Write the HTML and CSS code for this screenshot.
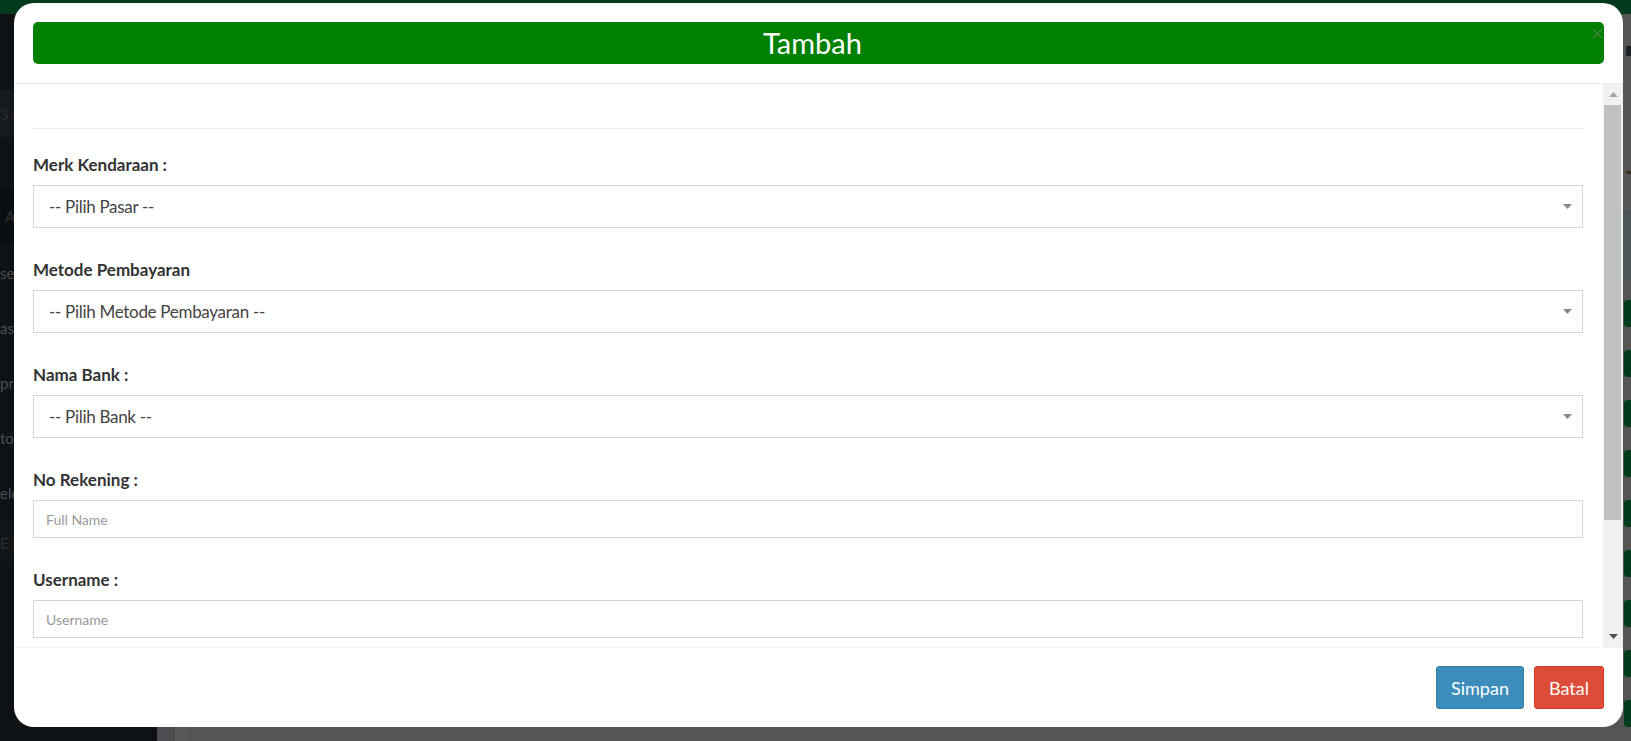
FILE: index.html
```html
<!DOCTYPE html>
<html lang="id">
<head>
<meta charset="utf-8">
<title>Tambah</title>
<link rel="stylesheet" href="styles.css">
</head>
<body>
<div class="app">
  <header class="topbar"></header>
  <div class="layout">
    <aside class="sidebar">
      <div class="sb-block sb-brand"><span class="sb-dim">3 O</span></div>
      <div class="sb-gap"></div>
      <div class="sb-block sb-head"><span class="sb-dim sb-a">A</span></div>
      <div class="sb-item">se</div>
      <div class="sb-item">as</div>
      <div class="sb-item">pro</div>
      <div class="sb-item">to</div>
      <div class="sb-item">ele</div>
      <div class="sb-block sb-foot"><span class="sb-dim">E R</span></div>
    </aside>
    <main class="content">
      <div class="strip-a"></div>
      <div class="strip-b"></div>
      <div class="content-main"></div>
      <div class="right-col">
        <div class="rc-top"><span class="rc-mark rc-mark-1"></span><span class="rc-mark rc-mark-2"></span></div>
        <div class="rc-band"></div>
        <div class="rc-list">
          <span class="rc-box"></span><span class="rc-box"></span><span class="rc-box"></span>
          <span class="rc-box"></span><span class="rc-box"></span><span class="rc-box"></span>
          <span class="rc-box"></span><span class="rc-box"></span><span class="rc-box"></span>
        </div>
      </div>
    </main>
  </div>
</div>

<div class="modal" role="dialog">
  <div class="modal-header">
    <div class="title-bar">
      <h4 class="modal-title">Tambah</h4>
      <button class="close" type="button" aria-label="Close">
        <svg width="11" height="11" viewBox="0 0 11 11"><path d="M1 1L10 10M10 1L1 10" stroke="#3f7f3f" stroke-width="1.6" fill="none"/></svg>
      </button>
    </div>
  </div>
  <div class="modal-main">
    <div class="modal-body">
      <hr class="divider">
      <div class="form-group">
        <label class="form-label">Merk Kendaraan :</label>
        <div class="select"><span class="select-text">-- Pilih Pasar --</span><svg class="caret" width="9" height="5" viewBox="0 0 9 5"><path d="M0 0H9L4.5 5Z" fill="#888"/></svg></div>
      </div>
      <div class="form-group">
        <label class="form-label">Metode Pembayaran</label>
        <div class="select"><span class="select-text">-- Pilih Metode Pembayaran --</span><svg class="caret" width="9" height="5" viewBox="0 0 9 5"><path d="M0 0H9L4.5 5Z" fill="#888"/></svg></div>
      </div>
      <div class="form-group">
        <label class="form-label">Nama Bank :</label>
        <div class="select"><span class="select-text">-- Pilih Bank --</span><svg class="caret" width="9" height="5" viewBox="0 0 9 5"><path d="M0 0H9L4.5 5Z" fill="#888"/></svg></div>
      </div>
      <div class="form-group">
        <label class="form-label">No Rekening :</label>
        <input class="input" type="text" placeholder="Full Name">
      </div>
      <div class="form-group">
        <label class="form-label">Username :</label>
        <input class="input" type="text" placeholder="Username">
      </div>
    </div>
    <div class="scrollbar">
      <div class="sb-btn"><svg width="9" height="5" viewBox="0 0 9 5"><path d="M0 5H9L4.5 0Z" fill="#a3a3a3"/></svg></div>
      <div class="sb-thumb"></div>
      <div class="sb-fill"></div>
      <div class="sb-btn"><svg width="9" height="5" viewBox="0 0 9 5"><path d="M0 0H9L4.5 5Z" fill="#505050"/></svg></div>
    </div>
  </div>
  <div class="modal-footer">
    <button class="btn btn-primary" type="button">Simpan</button>
    <button class="btn btn-danger" type="button">Batal</button>
  </div>
</div>
</body>
</html>
```

FILE: styles.css
```css
* { box-sizing: border-box; }

html, body {
  margin: 0;
  padding: 0;
}

body {
  width: 1631px;
  height: 741px;
  overflow: hidden;
  position: relative;
  background: #555555;
  font-family: Lato, "Liberation Sans", sans-serif;
}

/* ---------- page behind the modal (dimmed) ---------- */
.app {
  height: 741px;
  display: flex;
  flex-direction: column;
}

.topbar {
  flex: none;
  height: 14px;
  background: #033a1e;
}

.layout {
  flex: 1;
  display: flex;
  min-height: 0;
}

.sidebar {
  flex: none;
  width: 157px;
  background: #0f1214;
  display: flex;
  flex-direction: column;
  padding-top: 76px;
  font-size: 15px;
  color: #4a4e51;
  overflow: hidden;
}

.sb-block {
  display: flex;
  align-items: center;
}

.sb-brand {
  height: 47px;
  background: #15191b;
}

.sb-gap {
  height: 50px;
}

.sb-head {
  height: 58px;
  background: #0b0e10;
}

.sb-foot {
  height: 45px;
  background: #121517;
}

.sb-dim {
  color: #2c3033;
}

.sb-a {
  padding-left: 5px;
}

.sb-item {
  height: 55px;
  display: flex;
  align-items: center;
}

.content {
  flex: 1;
  display: flex;
}

.strip-a {
  width: 18px;
  background: #4b4d51;
}

.strip-b {
  width: 13px;
  background: #585858;
}

.content-main {
  flex: 1;
  background: #555555;
}

.right-col {
  width: 8px;
  display: flex;
  flex-direction: column;
}

.rc-top {
  height: 196px;
  background: #565656;
  display: flex;
  flex-direction: column;
  padding-top: 32px;
}

.rc-mark {
  display: block;
  width: 6px;
  margin-left: 3px;
  background: #1e2226;
}

.rc-mark-1 {
  height: 10px;
}

.rc-mark-2 {
  height: 3px;
  margin-top: 115px;
  background: #3a2e1c;
}

.rc-band {
  height: 70px;
  background: #4b5457;
}

.rc-list {
  flex: 1;
  background: #555555;
  display: flex;
  flex-direction: column;
  padding-top: 20px;
  gap: 23px;
}

.rc-box {
  display: block;
  height: 27px;
  margin-left: 1px;
  background: #013d1c;
  border-radius: 4px 0 0 4px;
}

/* ---------- modal ---------- */
.modal {
  position: absolute;
  left: 14px;
  top: 3px;
  width: 1609px;
  height: 724px;
  background: #ffffff;
  border-radius: 20px;
  display: flex;
  flex-direction: column;
  overflow: hidden;
}

.modal-header {
  flex: none;
  padding: 19px;
  border-bottom: 1px solid #ececec;
}

.title-bar {
  height: 42px;
  background: #008000;
  border-radius: 5px;
  display: flex;
}

.modal-title {
  flex: 1;
  margin: 0;
  text-align: center;
  color: #ffffff;
  font-size: 29px;
  font-weight: 400;
  line-height: 42px;
}

.close {
  flex: none;
  width: 11px;
  height: 11px;
  margin: 6px 1px 0 0;
  padding: 0;
  border: 0;
  background: none;
  display: flex;
}

.modal-main {
  flex: 1;
  min-height: 0;
  display: flex;
}

.modal-body {
  flex: 1;
  min-width: 0;
  padding: 19px 20px 0 19px;
  overflow: hidden;
}

.divider {
  margin: 25px 0 26px;
  height: 0;
  border: 0;
  border-top: 1px solid #ebebeb;
}

.form-group {
  margin-bottom: 32px;
}

.form-label {
  display: block;
  font-size: 17px;
  font-weight: 700;
  line-height: 20px;
  margin-bottom: 10px;
  color: #333333;
}

.select {
  height: 43px;
  border: 1px solid #d2d6de;
  display: flex;
  align-items: center;
  padding: 0 10px 1px 15px;
  font-size: 17px;
  letter-spacing: -0.3px;
  color: #444444;
}

.select-text {
  flex: 1;
}

.caret {
  flex: none;
  display: block;
}

.input {
  display: block;
  width: 100%;
  height: 38px;
  margin: 0;
  border: 1px solid #d2d6de;
  border-radius: 0;
  padding: 0 12px;
  font-family: Lato, "Liberation Sans", sans-serif;
  font-size: 14px;
  color: #555555;
  background: #ffffff;
  outline: none;
}

.input::placeholder {
  color: #999999;
}

.scrollbar {
  flex: none;
  width: 20px;
  background: #f1f1f1;
  display: flex;
  flex-direction: column;
}

.sb-btn {
  height: 21px;
  display: flex;
  align-items: center;
  justify-content: center;
}

.sb-thumb {
  height: 415px;
  width: 17px;
  margin-left: 1px;
  background: #c1c1c1;
}

.sb-fill {
  flex: 1;
}

.modal-footer {
  flex: none;
  height: 80px;
  border-top: 1px solid #f2f2f2;
  padding: 18px 19px;
  display: flex;
  justify-content: flex-end;
  gap: 10px;
}

.btn {
  height: 43px;
  padding: 0;
  border-radius: 3px;
  font-family: Lato, "Liberation Sans", sans-serif;
  font-size: 18px;
  color: #ffffff;
  text-align: center;
  cursor: pointer;
}

.btn-primary {
  width: 88px;
  background: #3c8dbc;
  border: 1px solid #367fa9;
}

.btn-danger {
  width: 70px;
  background: #dd4b39;
  border: 1px solid #d73925;
}
```
